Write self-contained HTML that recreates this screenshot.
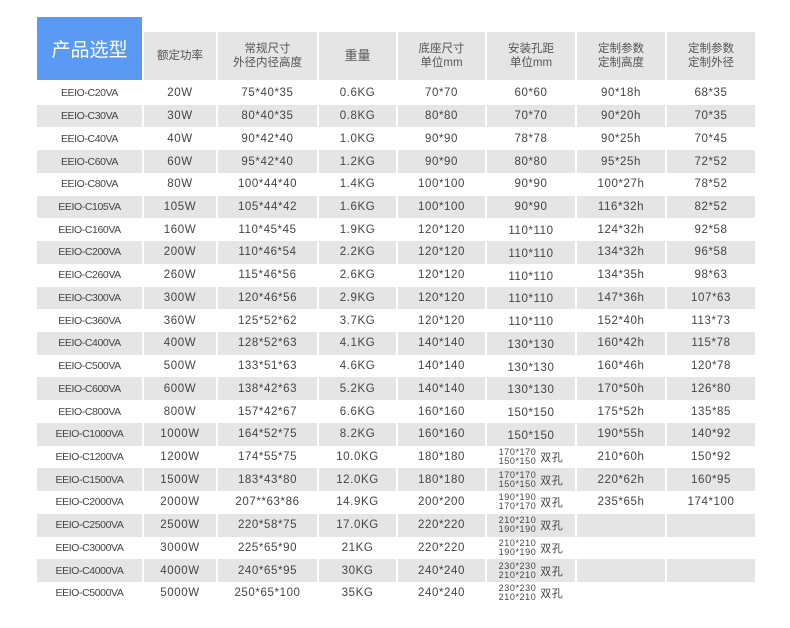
<!DOCTYPE html>
<html><head><meta charset="utf-8"><style>
body{margin:0;width:790px;height:628px;background:#fff;position:relative;overflow:hidden;font-family:"Liberation Sans","Noto Sans CJK SC",sans-serif;color:#444;}
.c{position:absolute;display:flex;align-items:center;justify-content:center;text-align:center;font-size:11.5px;}
.h{background:#e5e5e5;font-size:11.5px;line-height:14px;color:#555;}
.g{background:#e5e5e5;}
.sm{font-size:9px;line-height:9px;text-align:left}
</style></head><body>
<div class="c" style="left:37px;top:17px;width:105px;height:63px;background:#5a9af5;color:#fff;font-size:19px;">产品选型</div>
<div id="hd"></div>
<div id="rows"></div>
<script>
var L=[37,144,218,319,398,487,577,667],W=[105,72,99,77,87,88,88,88];
var H=["额定功率","常规尺寸<br>外径内径高度","<span style='font-size:13px'>重量</span>","底座尺寸<br>单位mm","安装孔距<br>单位mm","定制参数<br>定制高度","定制参数<br>定制外径"];
var s="";for(var i=0;i<7;i++)s+='<div class="c h" style="left:'+L[i+1]+'px;top:32px;width:'+W[i+1]+'px;height:48px">'+H[i]+'</div>';
document.getElementById("hd").innerHTML=s;
var D=[
["EEIO-C20VA","20W","75*40*35","0.6KG","70*70","60*60","90*18h","68*35"],
["EEIO-C30VA","30W","80*40*35","0.8KG","80*80","70*70","90*20h","70*35"],
["EEIO-C40VA","40W","90*42*40","1.0KG","90*90","78*78","90*25h","70*45"],
["EEIO-C60VA","60W","95*42*40","1.2KG","90*90","80*80","95*25h","72*52"],
["EEIO-C80VA","80W","100*44*40","1.4KG","100*100","90*90","100*27h","78*52"],
["EEIO-C105VA","105W","105*44*42","1.6KG","100*100","90*90","116*32h","82*52"],
["EEIO-C160VA","160W","110*45*45","1.9KG","120*120","110*110","124*32h","92*58"],
["EEIO-C200VA","200W","110*46*54","2.2KG","120*120","110*110","134*32h","96*58"],
["EEIO-C260VA","260W","115*46*56","2.6KG","120*120","110*110","134*35h","98*63"],
["EEIO-C300VA","300W","120*46*56","2.9KG","120*120","110*110","147*36h","107*63"],
["EEIO-C360VA","360W","125*52*62","3.7KG","120*120","110*110","152*40h","113*73"],
["EEIO-C400VA","400W","128*52*63","4.1KG","140*140","130*130","160*42h","115*78"],
["EEIO-C500VA","500W","133*51*63","4.6KG","140*140","130*130","160*46h","120*78"],
["EEIO-C600VA","600W","138*42*63","5.2KG","140*140","130*130","170*50h","126*80"],
["EEIO-C800VA","800W","157*42*67","6.6KG","160*160","150*150","175*52h","135*85"],
["EEIO-C1000VA","1000W","164*52*75","8.2KG","160*160","150*150","190*55h","140*92"],
["EEIO-C1200VA","1200W","174*55*75","10.0KG","180*180","170*170|150*150","210*60h","150*92"],
["EEIO-C1500VA","1500W","183*43*80","12.0KG","180*180","170*170|150*150","220*62h","160*95"],
["EEIO-C2000VA","2000W","207**63*86","14.9KG","200*200","190*190|170*170","235*65h","174*100"],
["EEIO-C2500VA","2500W","220*58*75","17.0KG","220*220","210*210|190*190","",""],
["EEIO-C3000VA","3000W","225*65*90","21KG","220*220","210*210|190*190","",""],
["EEIO-C4000VA","4000W","240*65*95","30KG","240*240","230*230|210*210","",""],
["EEIO-C5000VA","5000W","250*65*100","35KG","240*240","230*230|210*210","",""]];
s="";
for(var r=0;r<D.length;r++){var t=82+r*22.73,g=r%2?" g":"";
for(var c=0;c<8;c++){var v=D[r][c];var ex="";
if(v.indexOf("|")>0){var p=v.split("|");v='<span class="sm">'+p[0]+'<br>'+p[1]+'</span>&nbsp;<span style="font-size:11px">双孔</span>';}
else if(c==5&&r>=6){ex="padding-top:3px;box-sizing:border-box;";}
var fs=c==0?"font-size:10.5px;letter-spacing:-0.4px;":"letter-spacing:0.6px;";
s+='<div class="c'+g+'" style="'+fs+ex+'left:'+L[c]+'px;top:'+t+'px;width:'+W[c]+'px;height:22.73px">'+v+'</div>';}}
document.getElementById("rows").innerHTML=s;
</script>
</body></html>
